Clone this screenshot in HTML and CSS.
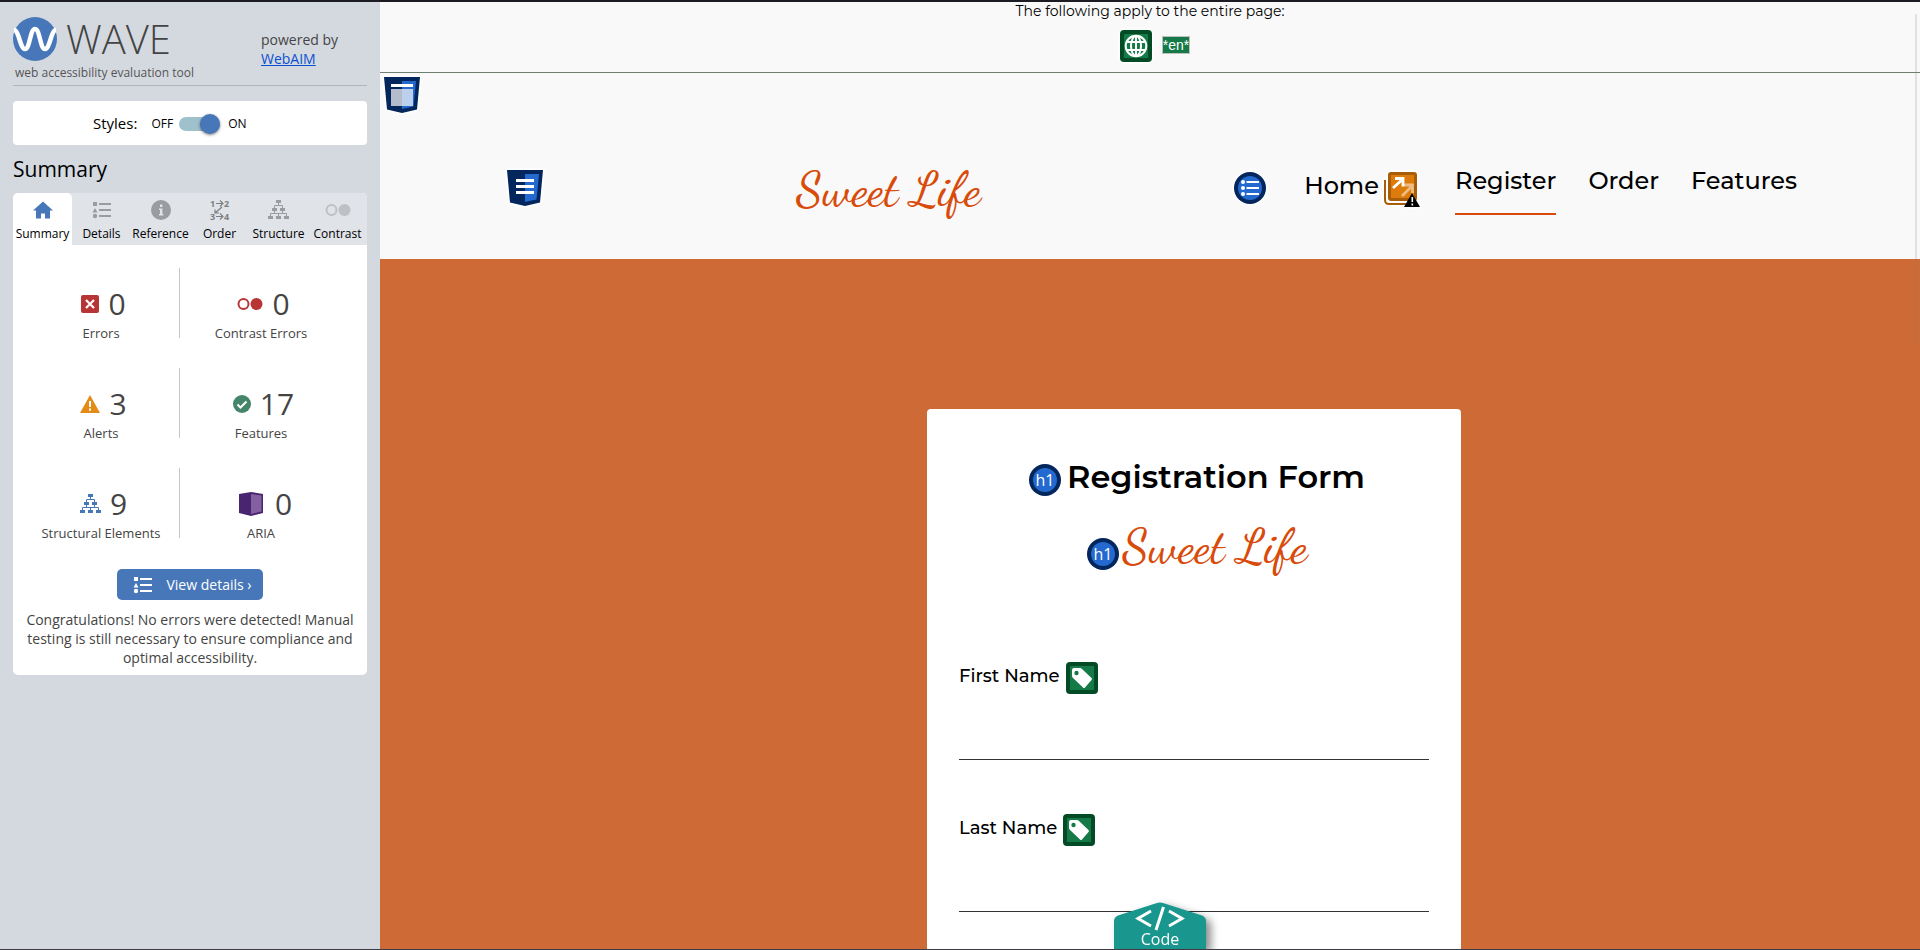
FILE: index.html
```html
<!DOCTYPE html>
<html lang="en">
<head>
<meta charset="utf-8">
<title>WAVE report: Sweet Life</title>
<link rel="stylesheet" href="styles.css">
</head>
<body>
<svg width="0" height="0" class="defs" aria-hidden="true">
  <defs>
    <symbol id="i-list" viewBox="0 0 20 18"><path d="M1 1h4v4H1zM3 7l2.500 4.500h-5zM7 2h12v2H7zM7 8h12v2H7zM7 14h12v2H7z"/><circle cx="3" cy="15" r="2.200"/></symbol>
    <symbol id="i-tree" viewBox="0 0 21 20"><path d="M8 0h5v3H8zM4 8h5v3H4zM12 8h5v3h-5zM0 16h5v3H0zM8 16h5v3H8zM16 16h5v3h-5z"/><path d="M10.500 3v2.500M6.500 8V5.500h8V8M6.500 11v2.500M14.500 11v2.500M2.500 16v-2.500h16V16M10.500 13.500V16" fill="none" stroke="currentColor"/></symbol>
    <symbol id="i-tag" viewBox="0 0 32 32"><rect width="32" height="32" rx="4" fill="#024b25"/><rect x="4" y="4" width="24" height="24" fill="#157a47"/><path d="M6 8q0-2 2-2h6q1 0 2 1l9.500 9q1 1 0 2L19 25.500q-1 1-2 0L7 16q-1-1-1-2z" fill="#fff"/><circle cx="10.500" cy="11" r="2.200" fill="#157a47"/></symbol>
    <symbol id="i-ring" viewBox="0 0 32 32"><circle cx="16" cy="16" r="16" fill="#03265c"/><circle cx="16" cy="16" r="12" fill="#2369cf"/></symbol>
    <symbol id="i-shield" viewBox="0 0 36 36"><path d="M0 0h36l-3 32.500L18 36 3 32.500z" fill="#03265c"/><path d="M18 4h14l-2.500 25.500L18 32z" fill="#2369cf"/></symbol>
  </defs>
</svg>
<div class="app">
<aside class="sidebar">
  <header class="brand">
    <div class="brand-main">
      <div class="brand-row">
        <svg class="brand-mark" viewBox="0 0 44 44" aria-hidden="true"><circle cx="22" cy="22" r="22" fill="#4777b8"/><path d="M1 13C6 13 7 32 12 32S17 12 22 12s5 20 10 20 6-19 11-19" fill="none" stroke="#fff" stroke-width="4.500"/></svg>
        <span class="brand-name">WAVE</span>
      </div>
      <p class="tagline">web accessibility evaluation tool</p>
    </div>
    <p class="powered">powered by<br><a href="#webaim">WebAIM</a></p>
  </header>
  <div class="styles-box">
    <span class="styles-label" id="styles-label">Styles:</span>
    <span class="state">OFF</span>
    <input class="switch" type="checkbox" role="switch" aria-labelledby="styles-label" checked>
    <span class="state">ON</span>
  </div>
  <h2 class="panel-title">Summary</h2>
  <section class="panel">
    <nav class="tabs">
      <button class="tab tab-active"><svg width="20" height="20" viewBox="0 0 20 20"><path d="M10 1.500L20 10.500h-3V18.500h-5v-5H8v5H3v-8H0z"/></svg>Summary</button>
      <button class="tab"><svg width="20" height="20"><use href="#i-list"/></svg>Details</button>
      <button class="tab"><svg width="20" height="20" viewBox="0 0 20 20"><circle cx="10" cy="10" r="10"/><path d="M9 4.500h2.400v2.400H9zM8 8.500h3.400v5.500h1v1.500H8V14h1v-4H8z" fill="#e0e3e8"/></svg>Reference</button>
      <button class="tab tab-dark"><svg width="20" height="20" viewBox="0 0 20 20"><g fill="none" stroke="currentColor" stroke-width="1.200"><path d="M6 3.500h7M10 .5l3 3-3 3M12 7l-7 6M5 9.500V13h4M6 16.500h7M10 13.500l3 3-3 3"/></g><g class="tiny"><text x="0" y="7">1</text><text x="14" y="7">2</text><text x="0" y="20">3</text><text x="14" y="20">4</text></g></svg>Order</button>
      <button class="tab"><svg width="21" height="20"><use href="#i-tree"/></svg>Structure</button>
      <button class="tab tab-light"><svg width="26" height="20" viewBox="0 0 26 20"><circle cx="6.500" cy="10" r="5" fill="none" stroke="currentColor" stroke-width="2"/><circle cx="19.500" cy="10" r="6"/></svg>Contrast</button>
    </nav>
    <div class="stats">
      <div class="stat"><div class="stat-value"><svg width="18" height="18" viewBox="0 0 18 18"><rect width="18" height="18" rx="2" fill="#b83536"/><path d="M5 5l8 8M13 5l-8 8" stroke="#fff" stroke-width="2.200"/></svg>0</div>Errors</div>
      <div class="stat"><div class="stat-value"><svg width="26" height="14" viewBox="0 0 26 14"><circle cx="6.500" cy="7" r="5" fill="none" stroke="#b83536" stroke-width="2"/><circle cx="19.500" cy="7" r="6" fill="#b83536"/></svg>0</div>Contrast Errors</div>
      <div class="stat"><div class="stat-value"><svg width="20" height="18" viewBox="0 0 20 18"><path d="M10 0l10 18H0z" fill="#e38b16"/><path d="M9 6h2v6H9zM9 13.500h2v2.200H9z" fill="#fff"/></svg>3</div>Alerts</div>
      <div class="stat"><div class="stat-value"><svg width="18" height="18" viewBox="0 0 18 18"><circle cx="9" cy="9" r="9" fill="#45866a"/><path d="M4.500 9.500l3 3 6-6" fill="none" stroke="#fff" stroke-width="2"/></svg>17</div>Features</div>
      <div class="stat"><div class="stat-value"><svg class="blue" width="21" height="20"><use href="#i-tree"/></svg>9</div>Structural Elements</div>
      <div class="stat"><div class="stat-value stat-wide"><svg width="24" height="24" viewBox="0 0 24 24"><path d="M0 2l12-2 12 2v19l-12 3-12-3z" fill="#492470"/><path d="M12 2l10.500 1.500v16L12 22z" fill="#8460a0"/></svg>0</div>ARIA</div>
    </div>
    <button class="details"><svg width="20" height="18"><use href="#i-list"/></svg>View details ›</button>
    <p class="message">Congratulations! No errors were detected! Manual testing is still necessary to ensure compliance and optimal accessibility.</p>
  </section>
</aside>
<main class="page">
  <div class="page-info">
    <p class="info-text">The following apply to the entire page:</p>
    <div class="info-icons">
      <svg class="halo" width="32" height="32" viewBox="0 0 32 32"><rect width="32" height="32" rx="4" fill="#024b25"/><rect x="4" y="4" width="24" height="24" fill="#157a47"/><g fill="none" stroke="#fff" stroke-width="2"><circle cx="16" cy="16" r="10.300"/><ellipse cx="16" cy="16" rx="5" ry="10"/><path d="M16 6v20M7 12h18M7 20h18"/></g></svg>
      <span class="lang">*en*</span>
    </div>
  </div>
  <header class="site-header">
    <svg class="region halo" width="36" height="36" viewBox="0 0 36 36"><use href="#i-shield"/><path d="M7 7h22v3H7z" fill="#fff"/><path d="M7 12h11v17H7z" fill="#b4bccb"/><path d="M18 12h11v17H18z" fill="#bcd0ee"/></svg>
    <div class="site-bar">
      <svg class="halo" width="36" height="36" viewBox="0 0 36 36"><use href="#i-shield"/><path d="M9 9h18v3H9zM9 15h18v3H9zM9 21h18v3H9z" fill="#fff"/></svg>
      <span class="script">Sweet Life</span>
      <nav class="site-nav">
        <svg class="nav-icon halo" width="32" height="32" viewBox="0 0 32 32"><use href="#i-ring"/><path d="M12.500 9H25v2H12.500zM12.500 15H25v2H12.500zM12.500 21H25v2H12.500z" fill="#fff"/><g fill="#fff"><circle cx="9" cy="10" r="2"/><circle cx="9" cy="16" r="2"/><circle cx="9" cy="22" r="2"/></g></svg>
        <span class="home"><a href="#home">Home</a><svg class="halo" width="36" height="36" viewBox="0 0 36 36"><path d="M1 8v20q0 4 4 4h22" fill="none" stroke="#a85e08" stroke-width="2"/><rect x="4" y="0" width="29" height="29" rx="3" fill="#a85e08"/><rect x="7" y="3" width="23" height="23" fill="#dd7c0a"/><path d="M18 24L28 14M20 13h8.500v8" fill="none" stroke="#eebd84" stroke-width="2.800"/><path d="M9 16L19 7M11 6.500h8v8" fill="none" stroke="#fff" stroke-width="2.800"/><path d="M28 21l8 14H20z" fill="#000"/><path d="M27.500 25h1.600v5h-1.600zM27.500 31.500h1.600v2h-1.600z" fill="#fff"/></svg></span>
        <a class="current" href="#register">Register</a>
        <a href="#order">Order</a>
        <a href="#features">Features</a>
      </nav>
    </div>
  </header>
  <section class="hero">
    <form class="card">
      <h1 class="card-title"><svg class="badge" width="32" height="32" viewBox="0 0 32 32"><use href="#i-ring"/><text x="16" y="22">h1</text></svg>Registration Form</h1>
      <div class="card-logo"><svg class="badge" width="32" height="32" viewBox="0 0 32 32"><use href="#i-ring"/><text x="16" y="22">h1</text></svg><span class="script">Sweet Life</span></div>
      <div class="field"><label for="first">First Name<svg width="32" height="32"><use href="#i-tag"/></svg></label><input id="first" type="text"></div>
      <div class="field"><label for="last">Last Name<svg width="32" height="32"><use href="#i-tag"/></svg></label><input id="last" type="text"></div>
    </form>
  </section>
  <button class="code"><svg class="code-shape" width="92" height="47" viewBox="0 0 92 47" aria-hidden="true"><path d="M0 47V19q0-4 4-5.500L43 1q3-1 6 0l39 12.500q4 1.500 4 5.500v28z" fill="#19978f"/><path d="M37 9L24 16.500 37 24M55 9l13 7.500L55 24M49.500 5L42 28" fill="none" stroke="#fff" stroke-width="3"/></svg><span class="code-text">Code</span></button>
  <div class="scroll-line"></div>
</main>
</div>
</body>
</html>
```
FILE: styles.css
```css
* { box-sizing: border-box; }
body { margin: 0; font-family: "Open Sans", "Noto Sans", sans-serif; color: #000; }
h1, h2, p { margin: 0; font-weight: 400; }
svg { display: block; flex: none; fill: currentColor; overflow: visible; }
button { font: inherit; border: 0; padding: 0; cursor: pointer; }
.defs { position: absolute; }
.app { display: grid; grid-template-columns: 380px 1fr; height: 100vh; overflow: hidden; border-top: 2px solid #1d1c24; border-bottom: 1px solid #3c3c42; }

.sidebar { background: #d4d9e0; padding: 15px 13px; }
.brand { display: flex; justify-content: space-between; height: 69px; border-bottom: 1px solid #b0b5bb; color: #444; }
.brand-row { display: flex; align-items: center; gap: 9px; height: 44px; }
.brand-mark { width: 44px; height: 44px; }
.brand-name { font-size: 40px; font-weight: 300; line-height: 44px; }
.tagline { font-size: 12px; line-height: 18px; margin: 3px 0 0 2px; color: #555; }
.powered { width: 106px; padding-top: 13px; font-size: 14px; line-height: 19px; }
.powered a { color: #0a50d0; }
.styles-box { display: flex; align-items: center; margin-top: 15px; padding-left: 80px; height: 44px; border-radius: 4px; background: #fff; }
.styles-label { font-size: 15px; margin-right: 14px; }
.state { font-size: 12px; }
.switch { appearance: none; position: relative; width: 41px; height: 14px; margin: 2px 8px 0 6px; border-radius: 7px; background: #9fc1cc; }
.switch::after { content: ""; position: absolute; right: 0; top: -3px; width: 20px; height: 20px; border-radius: 50%; background: #4777b8; box-shadow: 0 1px 3px rgba(0, 0, 0, .5); }
.panel-title { font-size: 21px; line-height: 28px; margin: 10px 0; }
.panel { border-radius: 5px; background: #fff; overflow: hidden; padding-bottom: 8px; text-align: center; color: #444; }
.tabs { display: grid; grid-template-columns: repeat(6, 1fr); height: 52px; background: #e0e3e8; }
.tab { display: flex; flex-direction: column; align-items: center; gap: 6px; padding-top: 7px; background: none; font-size: 12px; line-height: 16px; color: #000; white-space: nowrap; }
.tab svg { color: #9a9da0; }
.tab-dark svg { color: #7d8083; }
.tab-light svg { color: #bdc0c4; }
.tab-active { background: #fff; border-radius: 5px 5px 0 0; }
.tab-active svg, .blue { color: #4777b8; }
.tiny { font-size: 9px; font-weight: 700; }
.stats { display: grid; grid-template-columns: 167px 1fr; row-gap: 30px; margin-top: 23px; font-size: 13px; line-height: 18px; }
.stat { height: 70px; padding: 16px 0 0 10px; }
.stat:nth-child(odd) { border-right: 1px solid #c6c6c6; }
.stat:nth-child(even) { padding: 16px 25px 0 0; }
.stat-value { display: flex; justify-content: center; align-items: center; gap: 9px; height: 40px; padding-left: 5px; font-size: 30px; }
.stat-wide { gap: 12px; padding-left: 9px; }
.details { display: flex; align-items: center; gap: 13px; margin: 31px auto 0; padding: 0 11px 0 16px; height: 31px; border-radius: 5px; background: #4777b8; color: #fff; font-size: 14px; }
.message { margin-top: 10px; padding: 0 12px; font-size: 14px; line-height: 19px; }

.page { position: relative; display: flex; flex-direction: column; min-width: 0; overflow: hidden; background: #f9f9f9; font-family: Montserrat, Inter, sans-serif; }
.page-info { flex: none; height: 71px; padding-bottom: 10px; border-bottom: 1px solid #6f7f72; display: flex; flex-direction: column; align-items: center; justify-content: space-between; }
.info-text { font-size: 14px; line-height: 18px; }
.info-icons { display: flex; align-items: flex-start; gap: 10px; padding-left: 10px; }
.lang { margin-top: 6px; border: 1px solid #c0c0c0; background: #157a47; color: #fff; font: 14px/16px "Liberation Sans", Arial, sans-serif; }
.halo { filter: drop-shadow(0 0 1px #fff) drop-shadow(0 0 1px #fff) drop-shadow(0 0 1px #fff); }
.site-header { flex: none; height: 186px; padding: 4px 123px 0 4px; }
.site-bar { display: flex; justify-content: space-between; padding: 53px 0 0 123px; align-items: flex-start; }
.site-bar > .halo { margin-top: 4px; }
.script { color: #d84b0a; font-family: "Dancing Script", "Liberation Serif", cursive; font-size: 48px; font-weight: 500; line-height: 48px; }
.site-nav { display: flex; align-items: flex-start; font-size: 24px; font-weight: 500; line-height: 28px; gap: 32px; padding-top: 6px; }
.site-nav a { color: #000; text-decoration: none; margin-top: -5px; }
.nav-icon { margin-right: 6px; }
.home { display: flex; gap: 5px; margin-right: 3px; }
.site-nav .home a { margin-top: 0; }
.site-nav .current { height: 48px; border-bottom: 2px solid #d84b0a; }
.hero { flex: 1 0 auto; background: #ce6a35; padding: 150px 459px 0 547px; }
.card { height: 700px; padding: 46px 32px; border-radius: 4px; background: #fff; }
.card-title { display: flex; justify-content: center; align-items: center; gap: 6px; padding-left: 6px; font-size: 32px; font-weight: 600; line-height: 44px; }
.card-title .badge { margin-top: 6px; }
.card-logo { display: flex; justify-content: center; align-items: flex-start; gap: 4px; height: 163px; padding: 24px 0 0 6px; }
.card-logo .badge { margin-top: 15px; }
.badge text { font-family: "Open Sans", sans-serif; font-size: 16px; font-weight: 400; text-anchor: middle; fill: #fff; }
.field { display: flex; flex-direction: column; height: 152px; }
.field label { display: flex; align-items: flex-start; gap: 6px; font-size: 18px; font-weight: 500; line-height: 28px; }
.field input { border: 0; border-bottom: 1px solid #333; height: 66px; background: none; }
.code { position: absolute; left: 734px; bottom: 0; width: 92px; height: 47px; background: none; color: #fff; font-family: "Open Sans", sans-serif; filter: drop-shadow(5px 4px 4px rgba(0, 0, 0, .45)); }
.code-text { position: absolute; left: 0; right: 0; bottom: 0; font-size: 16px; line-height: 20px; }
.scroll-line { position: absolute; right: 3px; top: 12px; width: 2px; height: 329px; background: rgba(128, 128, 128, .2); }
```
